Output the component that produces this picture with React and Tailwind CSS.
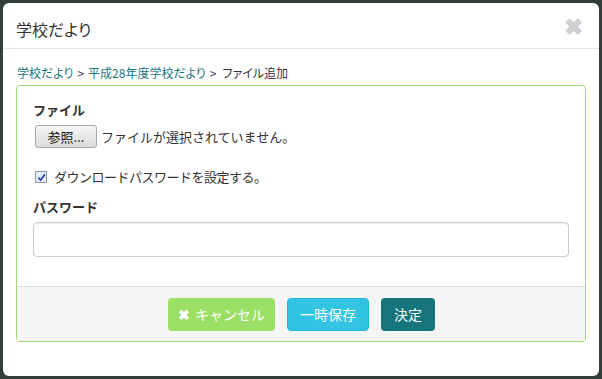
import React from 'react';

const font = { fontFamily: '"Noto Sans CJK JP", "Noto Sans", sans-serif' };

const App = () => {
  return (
    <div className="w-[602px] h-[379px] bg-[#323d3c] p-[3px]" style={font}>
      <div className="h-full bg-white rounded-[6px] flex flex-col text-[#333]">
        {/* Header */}
        <div className="h-[46px] pl-[13px] pr-[15px] flex items-center justify-between border-b border-[#e5e5e5]">
          <h4 className="text-[16px] leading-none mt-[6px] [font-feature-settings:'palt']">学校だより</h4>
          <span className="text-[#cfcfcf] text-[23px] font-bold leading-none mr-[1px]">✖</span>
        </div>

        {/* Body */}
        <div className="px-[13px] pt-[14px]">
          <div className="text-[12px] leading-[20px] pl-[1px] mb-[2px] [font-feature-settings:'palt']">
            <a href="#" className="text-[#17757a]">学校だより</a>
            <span className="mx-[4px] text-[#443355]">&gt;</span>
            <a href="#" className="text-[#17757a]">平成28年度学校だより</a>
            <span className="mx-[4px] text-[#443355]">&gt;</span>
            <span className="ml-[2px]">ファイル追加</span>
          </div>

          <div className="border border-[#9ddc6b] rounded-[4px] overflow-hidden">
            <div className="px-[16px] pt-[14px] pb-[29px]">
              <div className="text-[13px] font-bold leading-[20px]">ファイル</div>
              <div className="flex items-center mt-[5px] text-[13px]">
                <button className="ml-[2px] w-[62px] h-[23px] border border-[#a8a8a8] rounded-[3px] bg-gradient-to-b from-[#f6f6f6] to-[#dcdcdc] text-[13px] leading-none text-[#111]">
                  参照...
                </button>
                <span className="ml-[4px]">ファイルが選択されていません。</span>
              </div>
              <label className="flex items-center mt-[19px] text-[13px] leading-[20px]">
                <span className="ml-[2px] w-[12px] h-[12px] border border-[#8a9bb0] bg-[#e8eef6] flex items-center justify-center">
                  <svg viewBox="0 0 10 10" width="9" height="9">
                    <path d="M1.5 5 L4 7.8 L8.8 1.5" fill="none" stroke="#2a4dba" strokeWidth="2" />
                  </svg>
                </span>
                <span className="ml-[7px] tracking-[-0.5px]">ダウンロードパスワードを設定する。</span>
              </label>
              <div className="text-[13px] font-bold leading-[20px] mt-[10px]">パスワード</div>
              <input
                type="password"
                className="mt-[5px] w-full h-[35px] border border-[#cccccc] rounded-[4px] shadow-[inset_0_1px_1px_rgba(0,0,0,0.075)] outline-none"
              />
            </div>
            <div className="bg-[#f5f5f5] border-t border-[#dddddd] h-[55px] flex items-center justify-center gap-[12px] pl-[1px] pt-[1px]">
              <button className="h-[33px] w-[107px] rounded-[4px] bg-[#9cdf66] text-white text-[14px] flex items-center justify-center gap-[5px]">
                <span className="font-bold text-[14px]">✖</span>
                <span>キャンセル</span>
              </button>
              <button className="h-[33px] w-[82px] rounded-[4px] bg-[#33c4e3] border border-[#1ab8dc] text-white text-[14px]">
                一時保存
              </button>
              <button className="h-[33px] w-[54px] rounded-[4px] bg-[#15757a] text-white text-[14px]">
                決定
              </button>
            </div>
          </div>
        </div>
      </div>
    </div>
  );
};

export default App;
